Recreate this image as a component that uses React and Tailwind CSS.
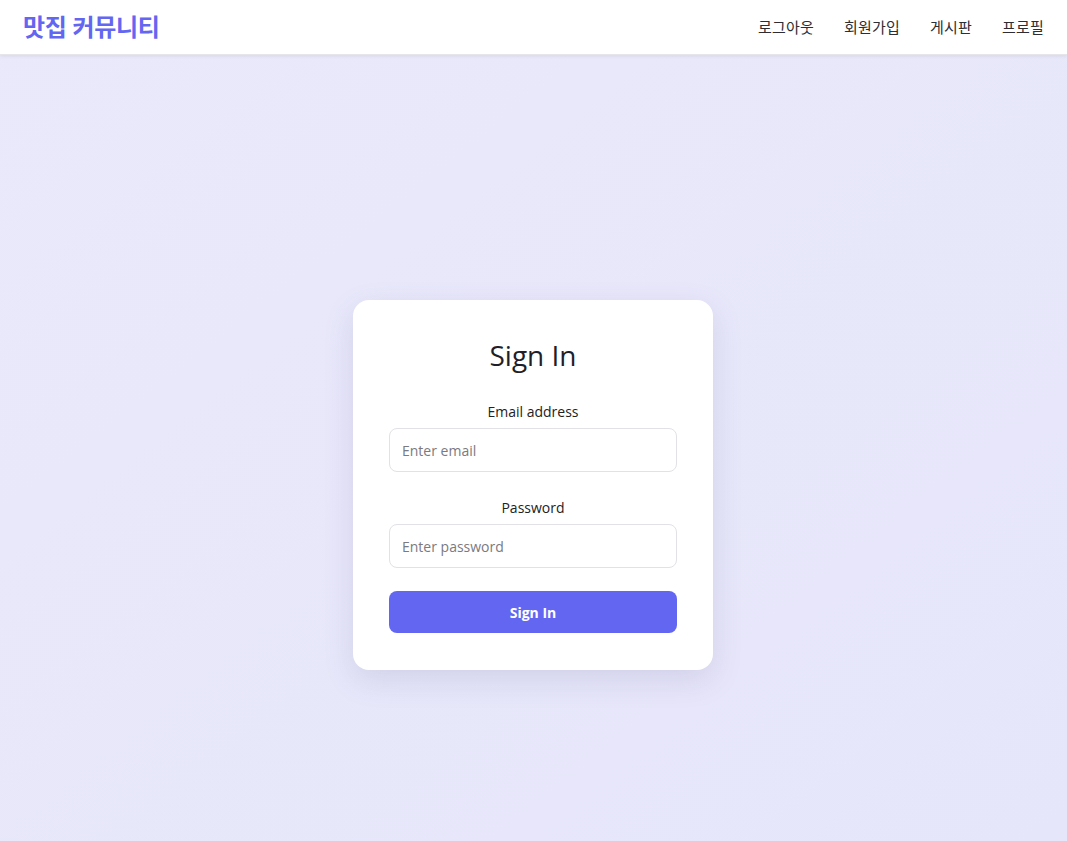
import React from 'react';

const font = { fontFamily: '"Open Sans", "Noto Sans CJK KR", sans-serif' };

const NavBar = () => {
  const links = ['로그아웃', '회원가입', '게시판', '프로필'];
  return (
    <header className="h-[55px] bg-white shadow-[0_1px_4px_rgba(0,0,0,0.08)] border-b border-[#e5e5ea] flex items-center justify-between pl-[23px] pr-[23px] relative z-10">
      <div className="text-[24px] font-bold text-[#6366f1] tracking-[-0.3px]">맛집 커뮤니티</div>
      <nav className="flex items-center gap-[30px] text-[15px] text-[#2d2d33] tracking-[0.2px]">
        {links.map((l) => (
          <a key={l} href="#" className="hover:text-[#6366f1]">
            {l}
          </a>
        ))}
      </nav>
    </header>
  );
};

const SignInCard = () => {
  return (
    <div className="w-[360px] bg-white rounded-2xl shadow-[0_10px_30px_rgba(80,80,140,0.15)] px-9 pt-[36px] pb-[37px]">
      <h1 className="text-[28px] text-[#1f1f2a] text-center leading-[38px] mb-[28px]">Sign In</h1>
      <form className="flex flex-col" onSubmit={(e) => e.preventDefault()}>
        <label className="text-[14px] text-[#222] text-center leading-5 mb-[6px]">Email address</label>
        <input
          type="email"
          placeholder="Enter email"
          className="h-[44px] border border-[#e2e2e6] rounded-lg px-3 text-[14px] placeholder:text-[#7a7a80] outline-none mb-[26px]"
        />
        <label className="text-[14px] text-[#222] text-center leading-5 mb-[6px]">Password</label>
        <input
          type="password"
          placeholder="Enter password"
          className="h-[44px] border border-[#e2e2e6] rounded-lg px-3 text-[14px] placeholder:text-[#7a7a80] outline-none mb-[23px]"
        />
        <button
          type="submit"
          className="h-[42px] bg-[#6366f1] rounded-lg text-white text-[14px] font-bold hover:bg-[#5558e3]"
        >
          Sign In
        </button>
      </form>
    </div>
  );
};

export default function App() {
  return (
    <div style={font} className="min-h-screen flex flex-col bg-gradient-to-br from-[#eae9fb] to-[#e6e6fa]">
      <NavBar />
      <main className="flex-1 flex justify-center pt-[245px] pb-[171px] pr-px">
        <SignInCard />
      </main>
    </div>
  );
}
